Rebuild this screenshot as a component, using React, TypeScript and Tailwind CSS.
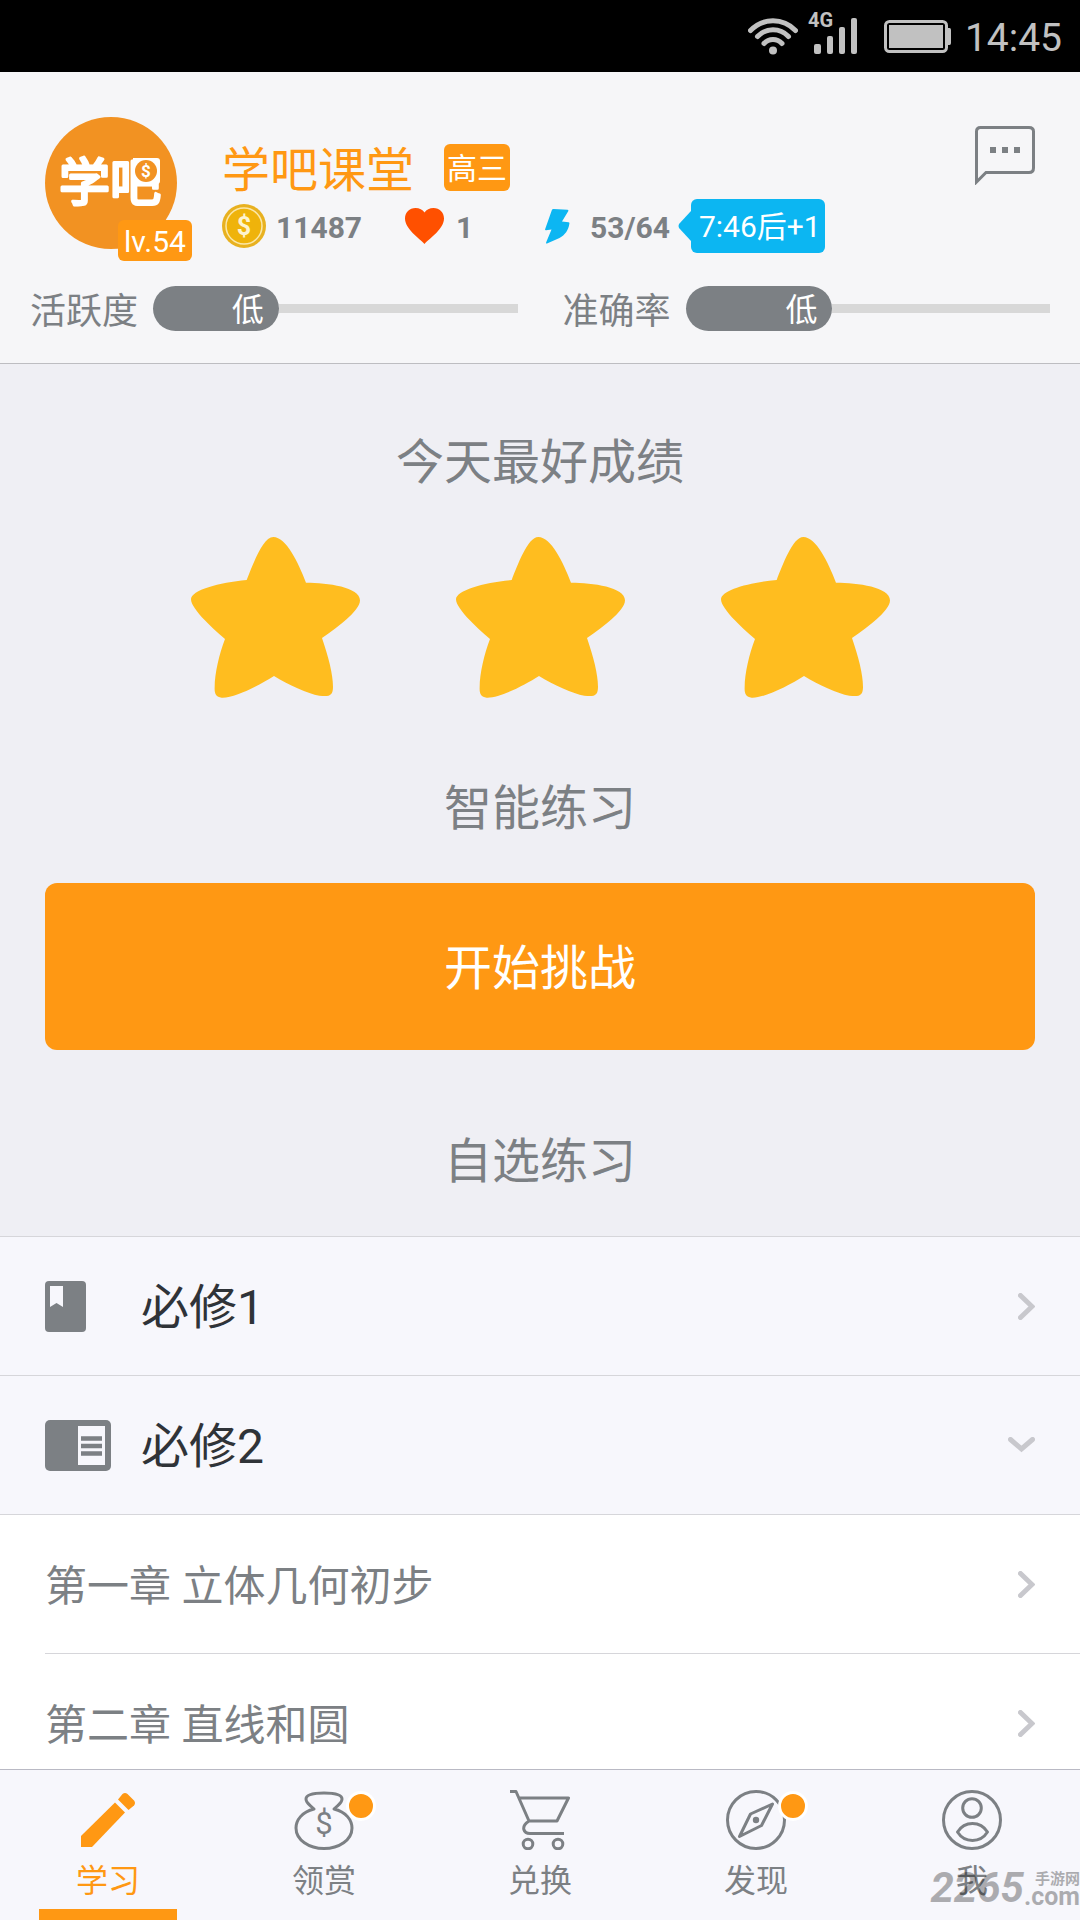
import type { ReactNode } from 'react'

const GREY = '#7c8084'

function StatusBar() {
  return (
    <div className="flex h-18 shrink-0 items-center justify-end bg-black pr-[18px] text-[#c1c1c1]">
      <svg width="50" height="38" viewBox="0 0 50 38" fill="none" stroke="currentColor" strokeWidth="5" strokeLinecap="round" aria-hidden="true">
        <path d="M2.500 13.500C15 .5 35 .5 47.500 13.500" />
        <path d="M9.500 19.500C18 10.500 32 10.500 40.500 19.500" />
        <path d="M16 26.500C21 21 29 21 34 26.500" />
        <circle cx="25" cy="33.500" r="4" fill="currentColor" stroke="none" />
      </svg>
      <svg className="ml-2" width="54" height="60" viewBox="0 0 54 60" fill="currentColor" aria-hidden="true">
        <text x="2" y="21" fontFamily="Roboto, sans-serif" fontWeight="700" fontSize="20">4G</text>
        <rect x="8" y="38" width="7" height="10" rx="2" />
        <rect x="21" y="30" width="6" height="18" rx="2" />
        <rect x="33" y="21" width="6" height="27" rx="2" />
        <rect x="45" y="12" width="6" height="36" rx="2" />
      </svg>
      <svg className="ml-6" width="68" height="34" viewBox="0 0 68 34" aria-hidden="true">
        <rect x="1.500" y="2.500" width="61" height="30" rx="4" fill="none" stroke="currentColor" strokeWidth="3" />
        <rect x="5" y="6" width="54" height="23" fill="currentColor" />
        <path d="M64 9h1.500q1.500 0 1.500 2v13q0 2-1.500 2H64z" fill="currentColor" />
      </svg>
      <span className="ml-[13px] pt-1 text-[39px] leading-none">14:45</span>
    </div>
  )
}

function Avatar() {
  return (
    <div className="relative h-33 w-33 shrink-0">
      <svg width="132" height="132" viewBox="0 0 132 132" role="img" aria-label="学吧">
        <circle cx="66" cy="66" r="66" fill="#f29222" />
        <text x="14" y="84" fontFamily="'Noto Sans CJK SC', sans-serif" fontWeight="400" fontSize="51" fill="#fff" stroke="#fff" strokeWidth="3" strokeLinejoin="round" strokeLinecap="round">学吧</text>
        <path d="M88 41h24a3 3 0 0 1 3 3v20a3 3 0 0 1-3 3H88z" fill="#fff" />
        <circle cx="101" cy="54" r="11" fill="#f29222" />
        <text x="101" y="60" textAnchor="middle" fontFamily="Roboto, sans-serif" fontWeight="700" fontSize="17" fill="#fff">$</text>
      </svg>
      <span className="absolute top-[103px] left-[73px] flex h-[41px] items-center rounded-md bg-[#ff9813] px-1.5 pt-0.5 text-[30px] leading-none whitespace-nowrap text-white">
        lv.54
      </span>
    </div>
  )
}

function Meter({ label, level, value }: { label: string; level: string; value: number }) {
  return (
    <div className="flex flex-1 items-center gap-[15px]">
      <span className="pt-[9px] text-4xl leading-[45px] text-[#7c8084]">{label}</span>
      <div role="meter" aria-label={label} aria-valuemin={0} aria-valuemax={100} aria-valuenow={value} aria-valuetext={level} className="flex flex-1 items-center">
        <div className="flex h-[45px] items-center justify-end rounded-full bg-[#7c8084] pt-1 pr-[15px] text-[32px] leading-none text-white" style={{ width: `${value}%` }}>
          {level}
        </div>
        <div className="h-[9px] flex-1 bg-[#d8d8d8]" />
      </div>
    </div>
  )
}

function Header() {
  return (
    <header className="shrink-0 border-b border-[#bdbdc1] bg-[#f6f6f8] pb-7">
      <div className="flex items-start px-[45px] pt-[45px]">
        <Avatar />
        <div className="ml-[45px] flex-1 pt-5">
          <div className="flex h-[62px] items-start">
            <h1 className="text-5xl leading-[67px] text-[#ff9813]">学吧课堂</h1>
            <span className="mt-[7px] ml-[30px] flex h-[47px] items-center rounded-md bg-[#ff9813] px-[3px] pt-0.5 text-[30px] leading-none text-white">高三</span>
          </div>
          <div className="flex h-[54px] items-center text-[30px] leading-none font-bold text-[#7c8084]">
            <svg width="44" height="44" viewBox="0 0 44 44" aria-hidden="true">
              <circle cx="22" cy="22" r="22" fill="#e8b120" />
              <circle cx="22" cy="22" r="18" fill="#efb30b" stroke="#fbe7a8" strokeWidth="1.500" />
              <text x="22" y="31" textAnchor="middle" fontFamily="Roboto, sans-serif" fontSize="25" fill="#fdf3cf">$</text>
            </svg>
            <span className="ml-[10px] w-[129px] pt-1">11487</span>
            <svg width="39" height="36" viewBox="0 0 39 36" fill="#ff5000" aria-hidden="true">
              <path d="M19.500 36C14 30 0 21 0 10.500C0 4.500 4.500 0 10.500 0C14.500 0 17.500 1.500 19.500 4.500C21.500 1.500 24.500 0 28.500 0C34.500 0 39 4.500 39 10.500C39 21 25 30 19.500 36z" />
            </svg>
            <span className="ml-3 w-[89px] pt-1">1</span>
            <svg width="25" height="35" viewBox="0 0 25 35" fill="#0cb6f2" aria-hidden="true">
              <path d="M8.500 0L22.500 .8Q23.800 1 23.200 2.200L17 12.500L23.500 13.200Q24.800 13.500 24.300 15C23.500 21 20 26 14.500 29L2 34.500Q.6 34.800 1.200 33.300L6.500 20.500L1 21.200Q-.3 21.300 .2 20L6.800 1.200Q7.200 0 8.500 0z" />
            </svg>
            <span className="ml-5 pt-1">53/64</span>
            <svg className="ml-2" width="13" height="30" viewBox="0 0 13 30" fill="#0cb6f2" aria-hidden="true">
              <path d="M13 0L1 13Q0 15 1 17L13 30z" />
            </svg>
            <span className="flex h-[54px] items-center rounded-md bg-[#0cb6f2] pt-0.5 pr-1 pl-2 font-normal whitespace-nowrap text-white">7:46后+1</span>
          </div>
        </div>
        <button type="button" aria-label="消息" className="mt-2">
          <svg width="60" height="60" viewBox="0 0 60 60" fill="none" stroke={GREY} strokeWidth="3" aria-hidden="true">
            <path d="M1.500 57V6.500Q1.500 2.500 5.500 2.500H54Q58.500 2.500 58.500 6.500V43Q58.500 47.500 54 47.500H11z" />
            <path d="M15 25h6M27 25h6M39 25h6" strokeWidth="6" />
          </svg>
        </button>
      </div>
      <div className="mt-7 flex gap-[45px] px-[30px]">
        <Meter label="活跃度" level="低" value={34.5} />
        <Meter label="准确率" level="低" value={40.3} />
      </div>
    </header>
  )
}

function Star() {
  return (
    <svg width="169" height="162" viewBox="0 0 507 486" fill="#ffbd1f" aria-hidden="true">
      <path d="M167 129C185 84 215 0 247 0C285 0 322 76 345 137C410 137 507 150 507 190C507 222 440 270 393 303C412 360 426 410 426 450C426 476 415 480 385 476C350 470 295 445 249 417C205 445 130 484 92 482C74 480 70 470 71 450C71 410 85 350 102 306C55 266 0 213 0 187C0 160 85 136 167 129z" />
    </svg>
  )
}

function Chevron({ open = false }: { open?: boolean }) {
  return open ? (
    <svg width="27" height="16" viewBox="0 0 27 16" fill="none" stroke="#c8c8cd" strokeWidth="5" strokeLinecap="round" aria-hidden="true">
      <path d="M2.500 2.500L13.500 12L24.500 2.500" />
    </svg>
  ) : (
    <svg width="17" height="27" viewBox="0 0 17 27" fill="none" stroke="#c8c8cd" strokeWidth="5" strokeLinecap="round" aria-hidden="true">
      <path d="M2.500 2.500L14 13.500L2.500 24.500" />
    </svg>
  )
}

function BookClosed() {
  return (
    <svg width="41" height="51" viewBox="0 0 41 51" aria-hidden="true">
      <rect width="41" height="51" rx="4" fill={GREY} />
      <path d="M5 5h13v21l-6.500-4L5 26z" fill="#f7f7fc" />
    </svg>
  )
}

function BookOpen() {
  return (
    <svg width="66" height="51" viewBox="0 0 66 51" aria-hidden="true">
      <rect width="66" height="51" rx="5" fill={GREY} />
      <rect x="33" y="6" width="27" height="39" fill="#f7f7fc" />
      <path d="M36 18.500h21M36 26h21M36 33.500h21" stroke={GREY} strokeWidth="4.500" />
    </svg>
  )
}

function BookRow({ icon, title, open = false }: { icon: ReactNode; title: string; open?: boolean }) {
  return (
    <button type="button" aria-expanded={open} className="flex h-[139px] w-full shrink-0 items-center border-t border-[#d6d6da] bg-[#f7f7fc] px-[45px] text-left">
      <span className="w-24">{icon}</span>
      <span className="flex-1 pt-1 text-5xl leading-[60px] text-[#2f3338]">{title}</span>
      <Chevron open={open} />
    </button>
  )
}

function ChapterRow({ title }: { title: string }) {
  return (
    <li className="border-t border-[#d6d6da]">
      <a href="#chapter" className="flex h-[138px] items-center pr-[45px]">
        <span className="flex-1 pt-1.5 text-[42px] leading-[60px] text-[#7c8084]">{title}</span>
        <Chevron />
      </a>
    </li>
  )
}

const tabIcons: Record<string, ReactNode> = {
  学习: (
    <g fill="#ff9813" stroke="none">
      <path d="M3 46L37 12.500L47 22.500L14 57H3z" />
      <path d="M40 9.500L44.500 4Q47 2 49.500 4L56 10.500Q58 13 56 15.500L50.500 20z" />
    </g>
  ),
  领赏: (
    <>
      <path d="M20 19C15 14 12 13 12 9C12 4 20 3 30 3S48 4 48 9C48 13 45 14 40 19C52 22 58 30 58 38C58 50 45 58.500 30 58.500S2 50 2 38C2 30 8 22 20 19z" />
      <text x="30" y="44" textAnchor="middle" fontFamily="Roboto, sans-serif" fontSize="31" fill={GREY} stroke="none">$</text>
    </>
  ),
  兑换: (
    <>
      <path d="M0 1.500H6L19 31H47L58.500 8H9M19 31C10 37 14 43.500 20 43.500H54" />
      <circle cx="18" cy="54" r="4.800" />
      <circle cx="48" cy="54" r="4.800" />
    </>
  ),
  发现: (
    <>
      <circle cx="30" cy="30" r="28.500" />
      <path d="M46.500 14L24.500 24L13.500 46.500L35.500 35.500z" />
      <circle cx="30" cy="30" r="3.200" fill={GREY} stroke="none" />
    </>
  ),
  我: (
    <>
      <circle cx="30" cy="30" r="28.500" />
      <circle cx="30" cy="18" r="9.300" />
      <path d="M15.500 42C19 36.500 24 33.500 30.500 33.500S42 36.500 45.500 42C42 47.500 37 50.500 30.500 50.500S19 47.500 15.500 42z" />
    </>
  ),
}

function Tab({ label, active = false, badge = false }: { label: string; active?: boolean; badge?: boolean }) {
  return (
    <button type="button" aria-current={active ? 'page' : undefined} className="flex flex-1 flex-col items-center pt-5">
      <span className="relative">
        <svg width="60" height="60" viewBox="0 0 60 60" fill="none" stroke={GREY} strokeWidth="3" strokeLinejoin="round" aria-hidden="true">
          {tabIcons[label]}
        </svg>
        {badge && <span className="absolute top-px left-[52px] h-[30px] w-[30px] rounded-full border-3 border-white bg-[#ff9813]" />}
      </span>
      <span className={active ? 'mt-[11px] text-[32px] leading-[40px] text-[#ff9813]' : 'mt-[11px] text-[32px] leading-[40px] text-[#7c8084]'}>{label}</span>
      {active && <span className="mt-auto h-[11px] w-[138px] bg-[#ff9813]" />}
    </button>
  )
}

function SectionTitle({ children }: { children: ReactNode }) {
  return <h2 className="text-center text-5xl leading-[60px] text-[#7c8084]">{children}</h2>
}

export default function App() {
  return (
    <div className="flex h-screen flex-col overflow-hidden bg-white font-['Roboto','Noto_Sans_CJK_SC',sans-serif]" lang="zh-CN">
      <StatusBar />
      <Header />
      <main className="flex-1 overflow-y-auto [scrollbar-width:none]">
        <section className="bg-[#efeff4] px-[45px] pt-[69px] pb-[44px]">
          <SectionTitle>今天最好成绩</SectionTitle>
          <div className="mt-[44px] flex justify-center gap-24" role="img" aria-label="三颗星">
            <Star />
            <Star />
            <Star />
          </div>
          <div className="mt-20">
            <SectionTitle>智能练习</SectionTitle>
          </div>
          <button type="button" className="mt-[44px] h-[167px] w-full rounded-xl bg-[#ff9813] pt-1 text-5xl text-white">
            开始挑战
          </button>
          <div className="mt-[82px]">
            <SectionTitle>自选练习</SectionTitle>
          </div>
        </section>
        <BookRow icon={<BookClosed />} title="必修1" />
        <BookRow icon={<BookOpen />} title="必修2" open />
        <div className="border-t border-[#d6d6da] bg-white pl-[45px]">
          <ul className="-mt-px [&>li:first-child]:border-transparent">
            <ChapterRow title="第一章 立体几何初步" />
            <ChapterRow title="第二章 直线和圆" />
          </ul>
        </div>
      </main>
      <nav className="relative flex h-[151px] shrink-0 border-t border-[#b9b9c4] bg-[#f7f7fc]">
        <Tab label="学习" active />
        <Tab label="领赏" badge />
        <Tab label="兑换" />
        <Tab label="发现" badge />
        <Tab label="我" />
        <div className="pointer-events-none absolute right-0 bottom-[14px] flex items-end font-bold text-black opacity-30">
          <span className="text-[42px] leading-[36px] italic">2265</span>
          <span className="flex flex-col items-end">
            <span className="text-[15px] leading-[18px]">手游网</span>
            <span className="text-[25px] leading-[18px]">.com</span>
          </span>
        </div>
      </nav>
    </div>
  )
}
